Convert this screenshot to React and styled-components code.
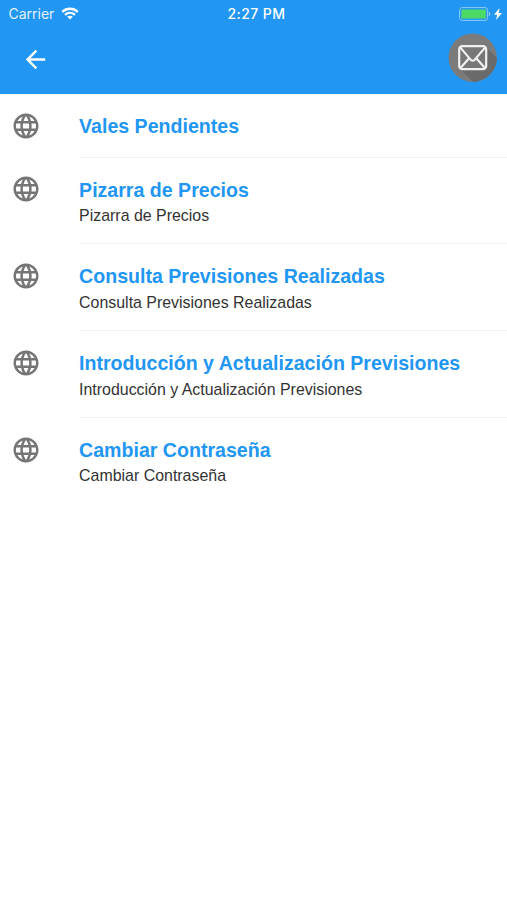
import React from 'react';
import styled, { createGlobalStyle } from 'styled-components';
import { MdArrowBack, MdLanguage } from 'react-icons/md';

const GlobalStyle = createGlobalStyle`
  * {
    box-sizing: border-box;
  }

  body {
    margin: 0;
    background: #fff;
    font-family: 'Liberation Sans', Arial, sans-serif;
  }
`;

const Screen = styled.div`
  width: 100%;
  min-height: 900px;
  background: #fff;
`;

const Header = styled.header`
  height: 94px;
  background: #2196f3;
  color: #fff;
`;

const StatusBar = styled.div`
  display: grid;
  grid-template-columns: 1fr auto 1fr;
  align-items: center;
  height: 27px;
  padding: 0 5px 0 8px;
  font-family: Inter, sans-serif;
  font-size: 14px;
  line-height: 26px;
`;

const Carrier = styled.div`
  display: flex;
  align-items: center;
  gap: 7px;
  padding-left: 0.5px;
  color: #e3f2fd;
`;

const Clock = styled.div`
  padding-left: 3px;
  font-size: 14px;
  font-weight: 500;
  letter-spacing: 0.4px;
`;

const Power = styled.div`
  display: flex;
  justify-content: flex-end;
  align-items: center;
  gap: 3px;
`;

const Toolbar = styled.div`
  display: flex;
  justify-content: space-between;
  align-items: flex-start;
  height: 67px;
  padding: 6px 10px 0 21px;
`;

const IconButton = styled.button`
  display: flex;
  padding: 0;
  margin-top: ${(props) => props.$offset || 0}px;
  border: none;
  background: none;
  color: #fff;
  cursor: pointer;
`;

const Menu = styled.ul`
  margin: 0;
  padding: 0;
  list-style: none;
`;

const MenuItem = styled.li`
  display: flex;
  height: ${(props) => (props.$single ? 63.6 : 86.8)}px;
  padding-left: 10.7px;
  color: #757575;
  cursor: pointer;

  svg {
    flex: none;
    margin-top: 16.6px;
  }
`;

const ItemBody = styled.div`
  flex: 1;
  margin-left: 38.4px;
  padding-top: 20px;
  border-bottom: 1px solid ${(props) => (props.$last ? 'transparent' : '#f3f3f3')};
`;

const Title = styled.div`
  color: #2196f3;
  font-size: 19.58px;
  font-weight: bold;
  line-height: 24px;
`;

const Subtitle = styled.div`
  margin-top: 4.5px;
  color: #333;
  font-size: 15.93px;
  line-height: 20px;
`;

const WifiIcon = () => (
  <svg width="18" height="13" viewBox="0 0 18 13" fill="none" stroke="#fff" strokeWidth="2.3">
    <path d="M1.2 4.8C5.6 .7 12.4 .7 16.8 4.8" />
    <path d="M4 7.8C6.9 5.2 11.1 5.2 14 7.8" />
    <path d="M9 12.6L6.2 9.8C7.8 8.4 10.2 8.4 11.8 9.8Z" fill="#fff" stroke="none" />
  </svg>
);

const BatteryIcon = () => (
  <svg width="32" height="14" viewBox="0 0 32 14">
    <rect x="0.6" y="0.6" width="28" height="12.8" rx="2.6" fill="none" stroke="#8fc9f8" />
    <rect x="2.4" y="2.4" width="24.4" height="9.2" rx="1.2" fill="#4cd964" />
    <path d="M29.9 4.8c1.8.6 1.8 3.8 0 4.4z" fill="#8fc9f8" />
  </svg>
);

const BoltIcon = () => (
  <svg width="8" height="12" viewBox="0 0 8 12" fill="#fff">
    <path d="M5.6 0L0 6.8h3.2L2 12 8 4.9H4.6z" />
  </svg>
);

const MailIcon = () => (
  <svg width="49" height="49" viewBox="0 0 49 49">
    <defs>
      <clipPath id="disc">
        <circle cx="24.7" cy="24.7" r="24.2" />
      </clipPath>
    </defs>
    <circle cx="24.7" cy="24.7" r="24.2" fill="#7b7b7b" />
    <path d="M37.5 13.5L60 36V60H36L11.5 35.5z" fill="#6a6a6a" clipPath="url(#disc)" />
    <rect x="11.2" y="13.2" width="27" height="23" rx="3.2" fill="#777" />
    <g fill="none" stroke="#f0f0f0" strokeWidth="2.2" strokeLinejoin="round">
      <rect x="11.2" y="13.2" width="27" height="23" rx="3.2" />
      <path d="M12.2 14.4L22.6 26.6C23.9 28.1 25.5 28.1 26.8 26.6L37.2 14.4" />
      <path d="M12.2 35.2L20.9 25.4M37.2 35.2L28.5 25.4" />
    </g>
  </svg>
);

const items = [
  { title: 'Vales Pendientes' },
  { title: 'Pizarra de Precios', subtitle: 'Pizarra de Precios' },
  { title: 'Consulta Previsiones Realizadas', subtitle: 'Consulta Previsiones Realizadas' },
  {
    title: 'Introducción y Actualización Previsiones',
    subtitle: 'Introducción y Actualización Previsiones',
  },
  { title: 'Cambiar Contraseña', subtitle: 'Cambiar Contraseña' },
];

const App = () => {
  return (
    <Screen>
      <GlobalStyle />

      <Header>
        <StatusBar>
          <Carrier>
            <span>Carrier</span>
            <WifiIcon />
          </Carrier>
          <Clock>2:27 PM</Clock>
          <Power>
            <BatteryIcon />
            <BoltIcon />
          </Power>
        </StatusBar>

        <Toolbar>
          <IconButton $offset={12} aria-label="Volver">
            <MdArrowBack size={29} />
          </IconButton>
          <IconButton aria-label="Mensajes">
            <MailIcon />
          </IconButton>
        </Toolbar>
      </Header>

      <Menu>
        {items.map((item, index) => (
          <MenuItem key={item.title} $single={!item.subtitle}>
            <MdLanguage size={30} />
            <ItemBody $last={index === items.length - 1}>
              <Title>{item.title}</Title>
              {item.subtitle && <Subtitle>{item.subtitle}</Subtitle>}
            </ItemBody>
          </MenuItem>
        ))}
      </Menu>
    </Screen>
  );
};

export default App;
